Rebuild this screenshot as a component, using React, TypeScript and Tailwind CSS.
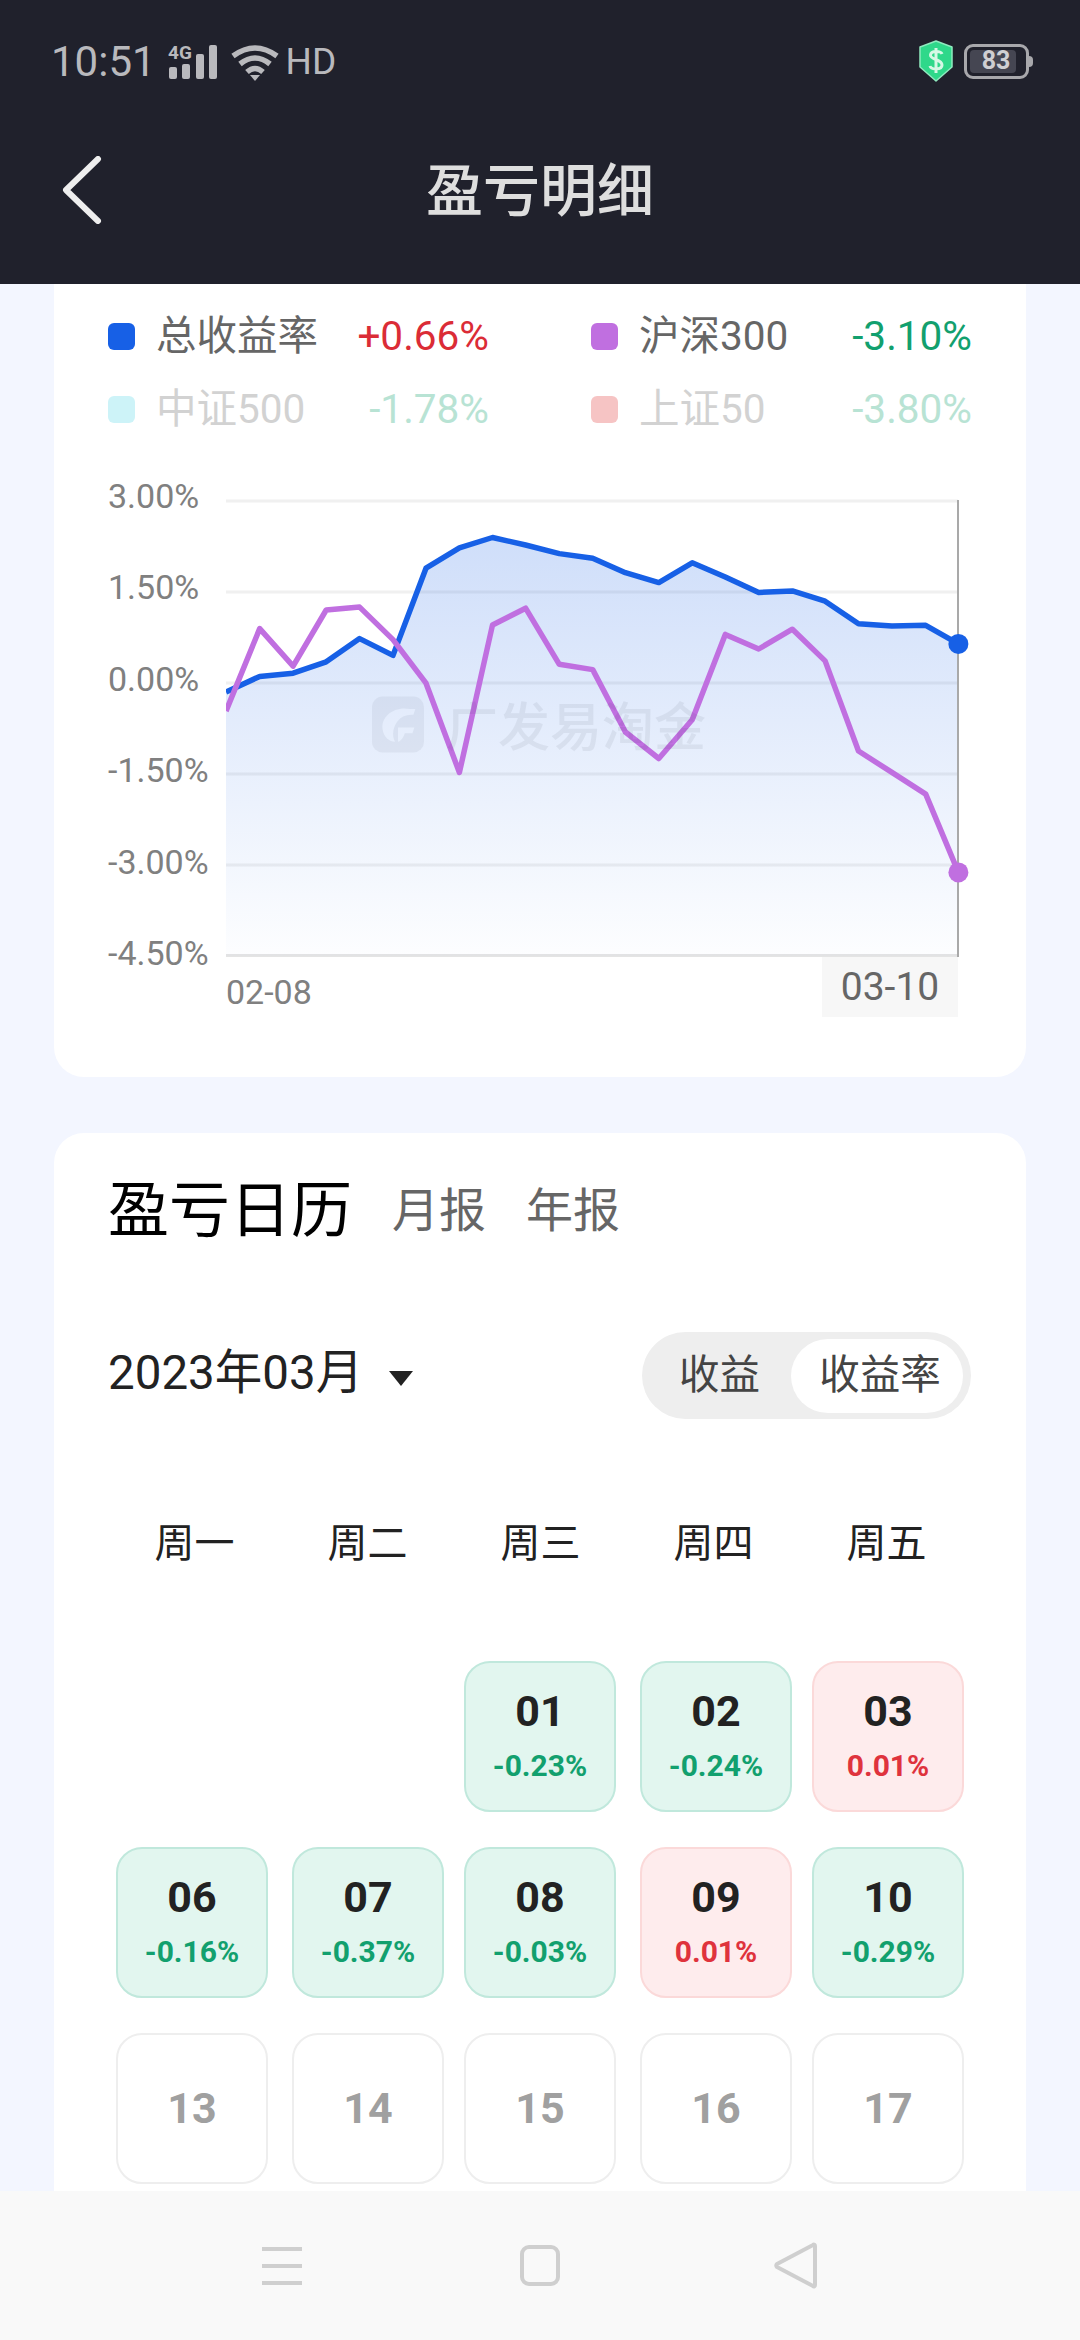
const blue: [number, number][] = [
  [482, 650], [580, 606], [677, 597], [773, 565], [870, 500], [967, 547], [1063, 303], [1160, 246], [1256, 217], [1352, 238], [1450, 262], [1547, 275],
]
const blueRight: [number, number][] = [
  [248, 285], [345, 310], [442, 260], [538, 296], [635, 335], [733, 331], [828, 357], [925, 414], [1022, 420], [1120, 418], [1215, 465],
]
const purple: [number, number][] = [
  [482, 703], [580, 472], [677, 577], [773, 420], [870, 412], [967, 503], [1063, 625], [1160, 875], [1256, 462], [1352, 415], [1450, 572], [1547, 587],
]
const purpleRight: [number, number][] = [
  [248, 688], [345, 755], [442, 657], [538, 441], [635, 478], [733, 428], [828, 508], [925, 736], [1022, 790], [1120, 845], [1215, 1043],
]

const toLeft = ([x, y]: [number, number]) => `${(60 + x / 2.904).toFixed(1)},${(460 + y / 2.8).toFixed(1)}`
const toRight = ([x, y]: [number, number]) => `${(540 + x / 2.904).toFixed(1)},${(460 + y / 2.529).toFixed(1)}`

const bluePoints = [...blue.map(toLeft), ...blueRight.map(toRight)].join(' ')
const purplePoints = [...purple.map(toLeft), ...purpleRight.map(toRight)].join(' ')

const legend = [
  { label: '总收益率', value: '+0.66%', box: 'bg-[#1760e6]', text: 'text-[#666666]', num: 'text-[#db2c36]' },
  { label: '沪深300', value: '-3.10%', box: 'bg-[#c06fe0]', text: 'text-[#666666]', num: 'text-[#12a06e]' },
  { label: '中证500', value: '-1.78%', box: 'bg-[#cdf3f8]', text: 'text-[#d2d2d2]', num: 'text-[#b8e3d4]' },
  { label: '上证50', value: '-3.80%', box: 'bg-[#f6c4c4]', text: 'text-[#d2d2d2]', num: 'text-[#b8e3d4]' },
]

const yLabels = ['3.00%', '1.50%', '0.00%', '-1.50%', '-3.00%', '-4.50%']
const gridY = [501, 592, 683, 774, 865]
const weekDays = ['周一', '周二', '周三', '周四', '周五']

type Day = { day: string; value?: string; tone?: 'green' | 'red' } | null

const days: Day[] = [
  null,
  null,
  { day: '01', value: '-0.23%', tone: 'green' },
  { day: '02', value: '-0.24%', tone: 'green' },
  { day: '03', value: '0.01%', tone: 'red' },
  { day: '06', value: '-0.16%', tone: 'green' },
  { day: '07', value: '-0.37%', tone: 'green' },
  { day: '08', value: '-0.03%', tone: 'green' },
  { day: '09', value: '0.01%', tone: 'red' },
  { day: '10', value: '-0.29%', tone: 'green' },
  { day: '13' },
  { day: '14' },
  { day: '15' },
  { day: '16' },
  { day: '17' },
]

const StatusBar = () => (
  <div className="flex h-[125px] items-start justify-between pl-[51px] pr-[51px] pt-[40px] text-[#b9b9bd]">
    <div className="flex items-center">
      <span className="text-[42px] leading-[44px]">10:51</span>
      <svg width="50" height="42" viewBox="0 -2 50 42" className="ml-[12px]" fill="#b9b9bd">
        <text x="0" y="16" fontSize="19" fontWeight="700" fontFamily="Roboto">4G</text>
        <rect x="1" y="24" width="8" height="12" rx="2" />
        <rect x="14" y="21" width="8" height="15" rx="2" />
        <rect x="28" y="11" width="8" height="25" rx="2" />
        <rect x="41" y="2" width="8" height="34" rx="2" />
      </svg>
      <svg width="48" height="38" viewBox="0 0 48 38" className="ml-[13px]" fill="none" stroke="#b9b9bd" strokeWidth="5.500">
        <path d="M2 13Q24 -3 46 13" />
        <path d="M9 21Q24 9 39 21" />
        <path d="M16 29Q24 22 32 29" />
        <path d="M19 32L24 38L29 32Z" fill="#b9b9bd" stroke="none" />
      </svg>
      <span className="ml-[7px] text-[37px] leading-[44px]">HD</span>
    </div>
    <div className="flex items-center">
      <svg width="36" height="42" viewBox="0 0 36 42">
        <path d="M18 1L34 7V27L18 41L2 27V7Z" fill="#2fd88a" stroke="#8feabf" strokeWidth="1.5" strokeLinejoin="round" />
        <path d="M24 14C23 11 13 10 12.500 15C12 20 24 19 24 25C24 30 13 30 12 26M18 8V33" fill="none" stroke="#d6f8e6" strokeWidth="3" />
      </svg>
      <div className="relative ml-[10px] flex h-[35px] w-[65px] items-center rounded-[9px] border-[3px] border-[#a8a8ac] p-[3px]">
        <div className="flex h-full w-[46px] items-center justify-center rounded-[4px] bg-[#454652] pl-[6px] text-[25px] font-bold text-[#cfcfd2]">
          83
        </div>
        <span className="absolute right-[-7px] top-[9px] h-[11px] w-[4px] rounded-r-full bg-[#a8a8ac]" />
      </div>
    </div>
  </div>
)

const Header = () => (
  <header className="relative shrink-0 bg-[#20212c]">
    <StatusBar />
    <div className="relative flex h-[159px] items-start justify-center">
      <svg width="40" height="68" viewBox="0 0 40 68" className="absolute left-[62px] top-[31px]" fill="none" stroke="#eeeeee" strokeWidth="6" strokeLinecap="round" strokeLinejoin="round">
        <path d="M36 3L4 34L36 65" />
      </svg>
      <h1 className="mt-[27px] text-[57px] font-medium leading-[80px] text-[#dedede]">盈亏明细</h1>
    </div>
  </header>
)

const Chart = () => (
  <div className="relative mt-[30px]">
    <div className="flex items-start">
      <div className="flex h-[497px] w-[118px] shrink-0 flex-col justify-between text-[34px] leading-[40px] text-[#808080]">
        {yLabels.map((label) => (
          <span key={label}>{label}</span>
        ))}
      </div>
      <svg width="744" height="467" viewBox="226 490 744 467" className="mt-[14px]">
        <defs>
          <linearGradient id="area" x1="0" y1="530" x2="0" y2="956" gradientUnits="userSpaceOnUse">
            <stop offset="0" stopColor="#1760e6" stopOpacity="0.21" />
            <stop offset="1" stopColor="#1760e6" stopOpacity="0.01" />
          </linearGradient>
        </defs>
        {gridY.map((y) => (
          <line key={y} x1="226" x2="958" y1={y} y2={y} stroke="#f0f0f0" strokeWidth="3" />
        ))}
        <line x1="226" x2="958" y1="955.500" y2="955.500" stroke="#e4e4e4" strokeWidth="3" />
        <polygon points={`226,956 ${bluePoints} 958.400,956`} fill="url(#area)" />
        <line x1="958" x2="958" y1="500" y2="957" stroke="#a9a9a9" strokeWidth="2" />
        <polyline points={bluePoints} fill="none" stroke="#1760e6" strokeWidth="5.500" strokeLinejoin="round" />
        <polyline points={purplePoints} fill="none" stroke="#c06fe0" strokeWidth="5.500" strokeLinejoin="round" />
        <circle cx="958.400" cy="643.900" r="10" fill="#1760e6" />
        <circle cx="958.400" cy="872.400" r="10" fill="#c06fe0" />
      </svg>
    </div>
    <div className="absolute left-[264px] top-[213px] flex items-center opacity-[0.07]">
      <svg width="52" height="59" viewBox="0 0 54 58">
        <rect width="54" height="58" rx="11" fill="#4a5568" />
        <path d="M39 13C24 10 9 20 11 34C12 42 18 47 24 47C20 40 22 30 28 24C32 20 37 19 43 19L45 13Z" fill="#ffffff" />
        <path d="M27 32H44L42 38H34C33 42 30 46 27 47Z" fill="#ffffff" />
      </svg>
      <span className="ml-[22px] mt-[10px] text-[52px] font-medium leading-[60px] text-[#2b3446]">广发易淘金</span>
    </div>
    <div className="-mt-[16px] ml-[118px] flex w-[732px] items-start justify-between">
      <span className="pt-[5px] text-[34px] leading-[60px] text-[#808080]">02-08</span>
      <span className="flex h-[60px] w-[136px] items-center justify-center bg-[#f7f7f7] text-[39px] text-[#666666]">03-10</span>
    </div>
  </div>
)

const DayCell = ({ item }: { item: Day }) => {
  if (!item) return <div className="h-[151px] w-[152px]" />

  if (!item.tone) {
    return (
      <div className="flex h-[151px] w-[152px] items-center justify-center rounded-[26px] border-2 border-[#eeeeee] bg-white text-[43px] font-bold text-[#a0a0a0]">
        {item.day}
      </div>
    )
  }

  const isGreen = item.tone === 'green'

  return (
    <div
      className={`flex h-[151px] w-[152px] flex-col items-center rounded-[26px] border-2 pt-[24px] ${
        isGreen ? 'border-[#c0e8dc] bg-[#e2f6ef]' : 'border-[#fbd9d9] bg-[#feeced]'
      }`}
    >
      <span className="text-[43px] font-bold leading-[48px] text-[#222222]">{item.day}</span>
      <span className={`mt-[13px] text-[30px] font-bold leading-[36px] ${isGreen ? 'text-[#12a06e]' : 'text-[#df333d]'}`}>
        {item.value}
      </span>
    </div>
  )
}

const Calendar = () => (
  <section className="mt-[56px] rounded-t-[30px] bg-white pb-[40px] pt-[38px]">
    <div className="flex h-[80px] items-center pl-[54px]">
      <h2 className="text-[61px] leading-[80px] text-black">盈亏日历</h2>
      <span className="ml-[40px] text-[47px] text-[#666666]">月报</span>
      <span className="ml-[40px] text-[47px] text-[#666666]">年报</span>
    </div>

    <div className="mt-[81px] flex h-[87px] items-center justify-between pl-[54px] pr-[55px]">
      <div className="flex items-center pb-[5px]">
        <span className="text-[47.5px] leading-[60px] text-[#222222]">2023年03月</span>
        <span className="ml-[26px] mt-[10px] h-0 w-0 border-x-[12.5px] border-t-[15px] border-x-transparent border-t-[#222222]" />
      </div>
      <div className="flex h-[87px] w-[329px] items-center rounded-full bg-[#eeeeee] pr-[8px]">
        <span className="flex-1 pl-[6px] text-center text-[40.5px] text-[#444444]">收益</span>
        <span className="flex h-[74px] w-[172px] items-center justify-center rounded-full bg-white pl-[6px] text-[40.5px] text-[#444444]">收益率</span>
      </div>
    </div>

    <div className="ml-[54px] mt-[95px] grid w-[865px] grid-cols-5">
      {weekDays.map((day) => (
        <span key={day} className="text-center text-[40px] leading-[60px] text-[#222222]">
          {day}
        </span>
      ))}
    </div>

    <div className="ml-[62px] mt-[87px] grid grid-cols-[176px_172px_176px_172px_152px] gap-y-[35px]">
      {days.map((item, index) => (
        <DayCell key={index} item={item} />
      ))}
    </div>
  </section>
)

const NavBar = () => (
  <nav className="relative flex h-[149px] shrink-0 items-center bg-[#f9f9f9]">
    <div className="ml-[262px] mt-[1px] flex h-[38px] w-[40px] flex-col justify-between">
      <span className="h-[4px] bg-[#cfcfcf]" />
      <span className="h-[4px] bg-[#cfcfcf]" />
      <span className="h-[4px] bg-[#cfcfcf]" />
    </div>
    <div className="ml-[218px] h-[41px] w-[40px] rounded-[9px] border-[4px] border-[#cfcfcf]" />
    <svg width="43" height="47" viewBox="0 0 43 47" className="ml-[214px]" fill="none" stroke="#cfcfcf" strokeWidth="4" strokeLinejoin="round">
      <path d="M39 3C40 2 41 3 41 4V43C41 44 40 45 39 44L3 25C2 24 2 23 3 22Z" />
    </svg>
  </nav>
)

export default function App() {
  return (
    <div className="flex h-[2340px] w-[1080px] flex-col overflow-hidden bg-[#f3f6ff] font-['Roboto','Noto_Sans_CJK_SC',sans-serif]">
      <Header />
      <main className="flex-1 overflow-hidden px-[54px]">
        <section className="rounded-b-[30px] bg-white px-[54px] pb-[55px] pt-[16px]">
          <div className="grid grid-cols-2 gap-x-[102px]">
            {legend.map((item) => (
              <div key={item.label} className="flex h-[73px] items-center text-[40.5px]">
                <span className={`h-[27px] w-[27px] rounded-[6px] ${item.box}`} />
                <span className={`ml-[21px] ${item.text}`}>{item.label}</span>
                <span className={`ml-auto ${item.num}`}>{item.value}</span>
              </div>
            ))}
          </div>
          <Chart />
        </section>
        <Calendar />
      </main>
      <NavBar />
    </div>
  )
}
